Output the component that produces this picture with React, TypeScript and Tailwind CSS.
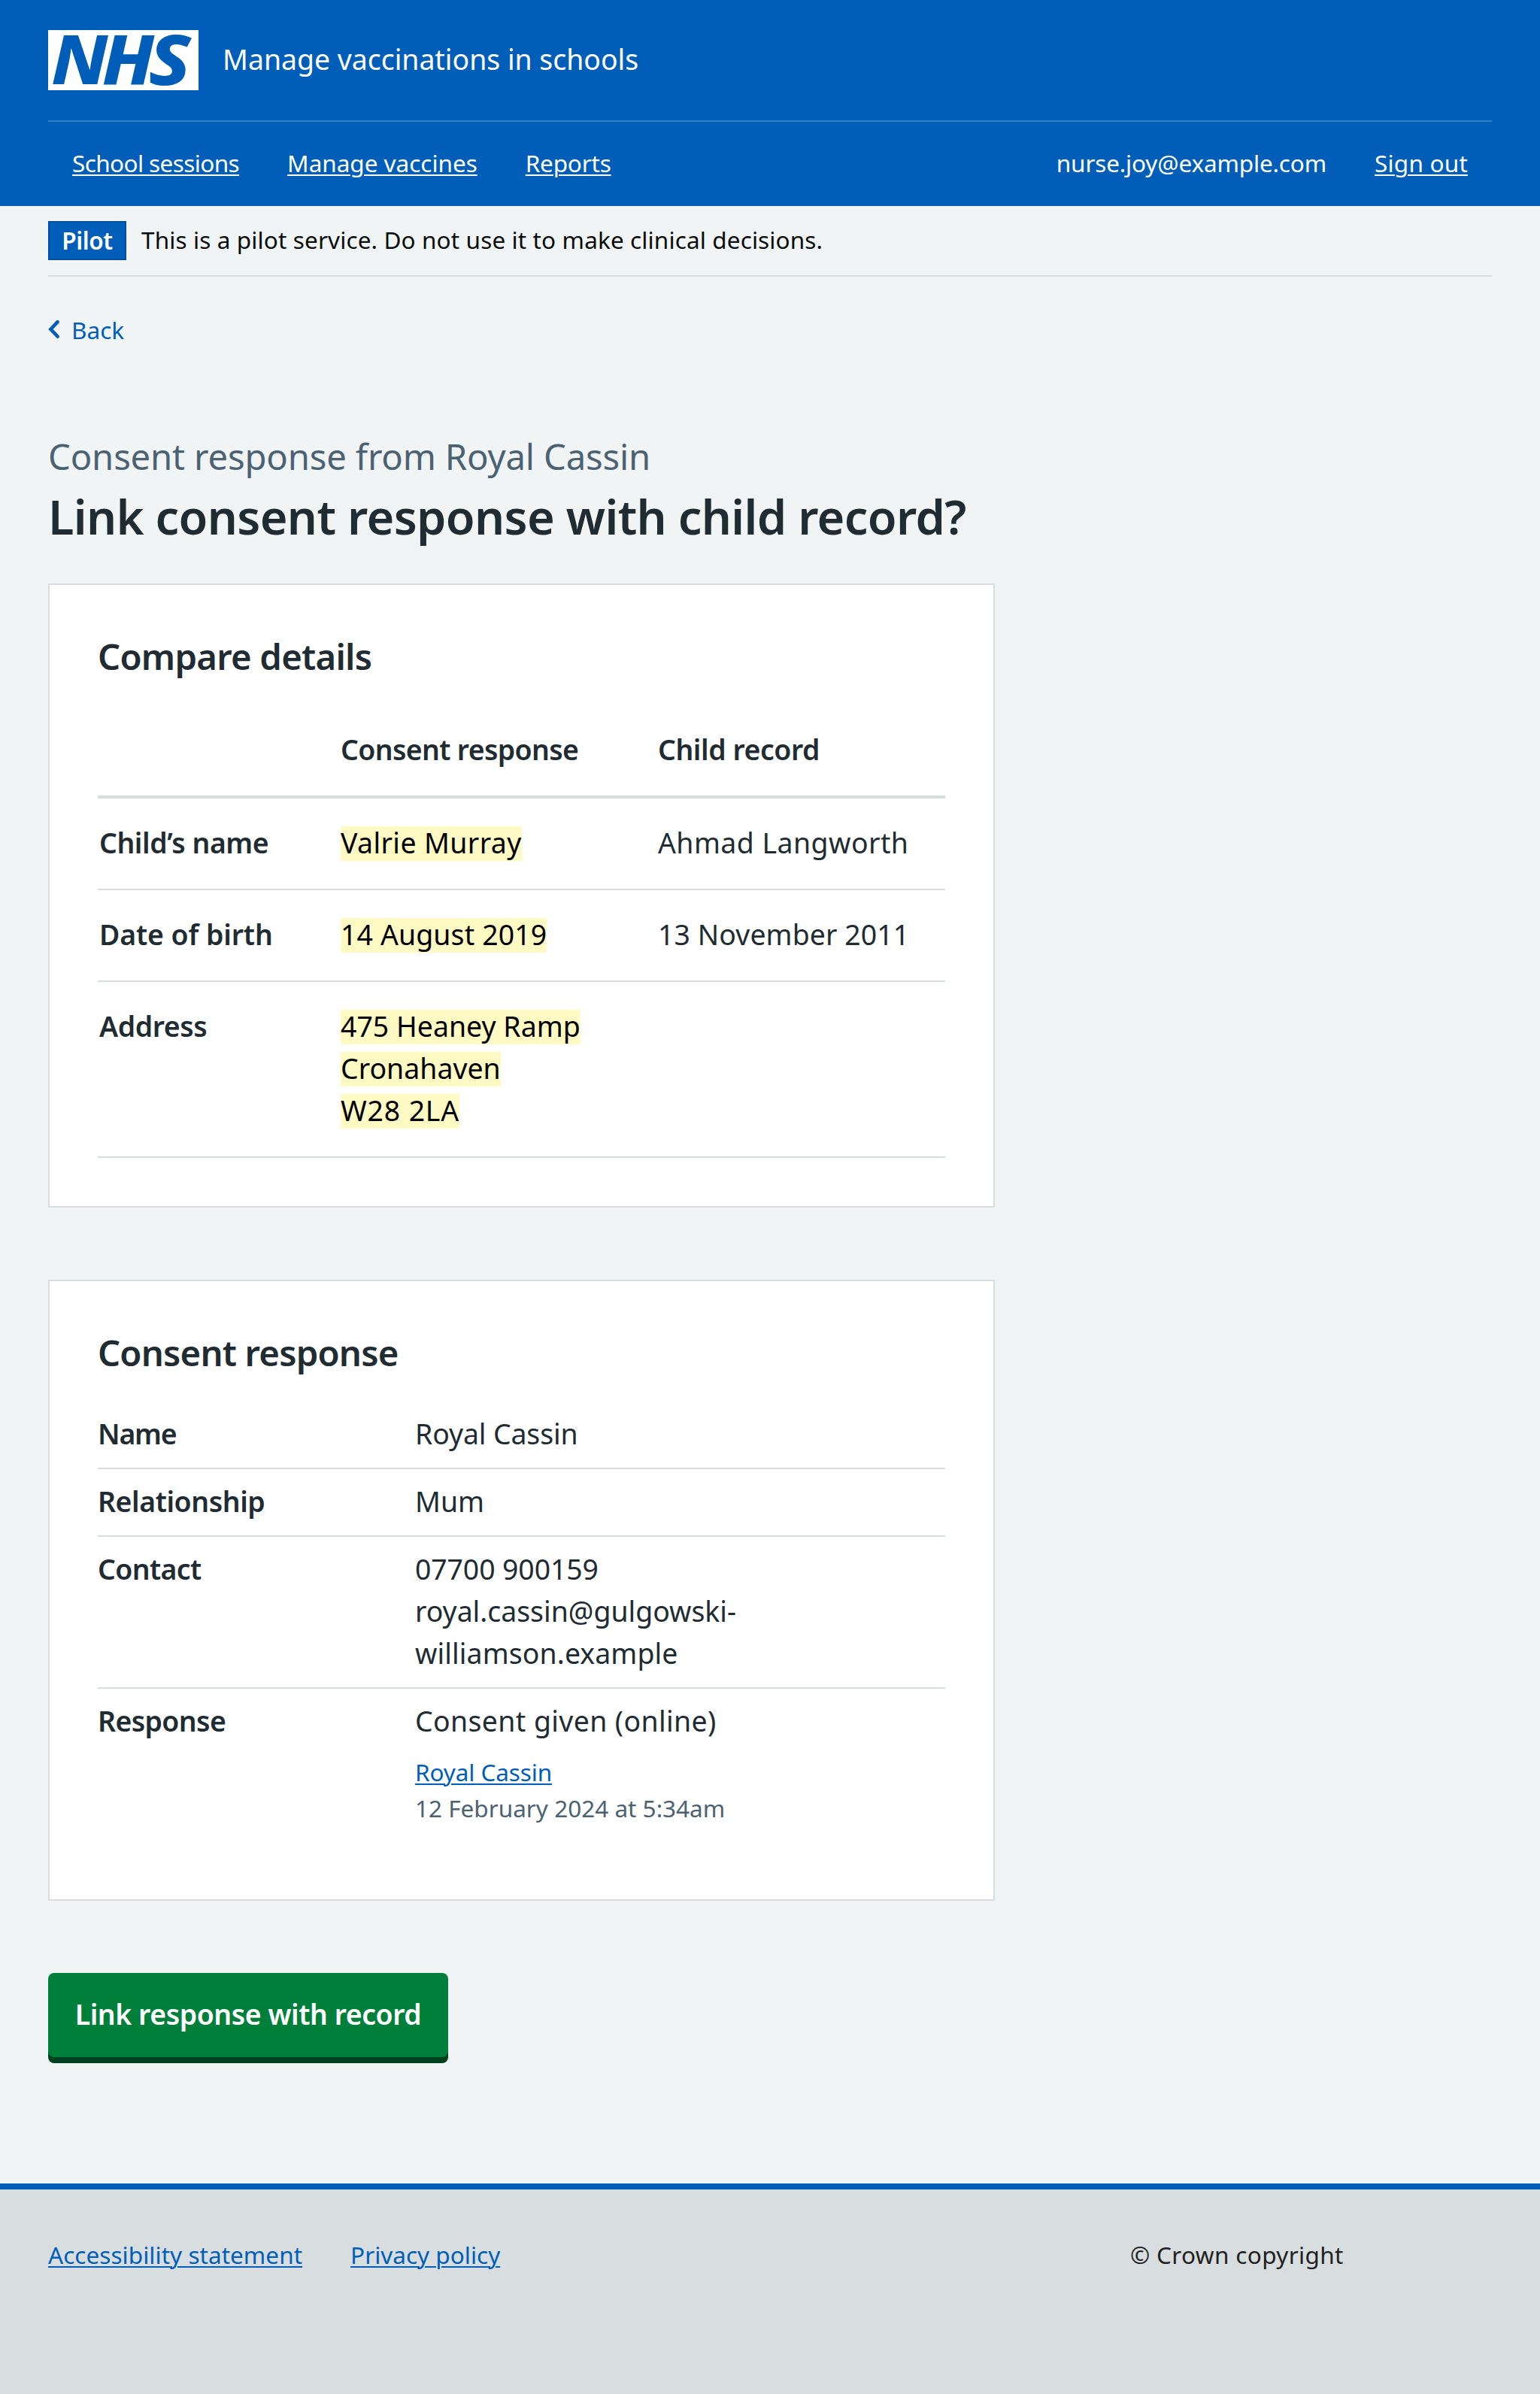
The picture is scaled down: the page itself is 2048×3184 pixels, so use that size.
import type { ReactNode } from 'react';

function Logo() {
  return (
    <svg viewBox="0 0 200 80" className="h-20 w-[200px] overflow-visible" role="img" aria-label="NHS">
      <rect width="200" height="80" fill="#ffffff" />
      <g fill="#005eb8" fontSize="91" fontWeight="800" fontStyle="italic" className="font-['Noto_Sans',sans-serif]">
        <text transform="translate(4.2 72.3) scale(1.07 1)">N</text>
        <text transform="translate(71.8 72.3) scale(1.078 1)">H</text>
        <text transform="translate(133.7 72.5) scale(1.145 1.015)">S</text>
      </g>
    </svg>
  );
}

function NavLink({ children, cls }: { children: ReactNode; cls: string }) {
  return (
    <a href="#" className={`underline decoration-2 underline-offset-[3px] ${cls}`}>
      {children}
    </a>
  );
}

function Card({ title, titleCls, children }: { title: string; titleCls: string; children: ReactNode }) {
  return (
    <section className="w-[1259px] border-2 border-[#d8dde0] bg-white px-16 pt-16">
      <h2 className={`h-24 text-[47.25px] leading-[62px] font-semibold ${titleCls}`}>{title}</h2>
      {children}
    </section>
  );
}

function Mark({ children, cls }: { children: ReactNode; cls: string }) {
  return <mark className={`block h-[46px] w-fit bg-[#fff9c4] leading-[43px] text-black ${cls}`}>{children}</mark>;
}

interface CompareRowProps {
  label: string;
  labelCls: string;
  height: string;
  mark: ReactNode;
  record?: ReactNode;
}

function CompareRow({ label, labelCls, height, mark, record }: CompareRowProps) {
  return (
    <div className={`grid grid-cols-[323px_422px_1fr] border-b-2 border-[#d8dde0] ${height}`}>
      <div className={`pt-[31px] pl-0.5 font-semibold ${labelCls}`}>{label}</div>
      <div className="flex flex-col gap-2.5 pt-[37px]">{mark}</div>
      <div className="pt-[31px]">{record}</div>
    </div>
  );
}

function SummaryRow({ label, labelCls, height, children }: { label: string; labelCls: string; height: string; children: ReactNode }) {
  return (
    <div className={`grid grid-cols-[422px_1fr] pt-[15px] ${height}`}>
      <div className={`font-semibold ${labelCls}`}>{label}</div>
      <div>{children}</div>
    </div>
  );
}

export default function App() {
  return (
    <div className="flex h-[3184px] w-[2048px] flex-col bg-[#f0f4f5] font-['Noto_Sans',sans-serif] text-[37.4px] leading-[56px] text-[#212b32]">
      <header className="h-[274px] bg-[#005eb8] px-16 text-white">
        <div className="flex h-[162px] items-center gap-8 border-b-2 border-white/20">
          <Logo />
          <span className="mb-0.5 leading-10">Manage vaccinations in schools</span>
        </div>
        <nav className="flex justify-between px-8 pt-[31px] text-[31.5px] leading-[48px]">
          <div className="flex gap-16">
            <NavLink cls="tracking-[-0.6px]">School sessions</NavLink>
            <NavLink cls="tracking-[-0.03px]">Manage vaccines</NavLink>
            <NavLink cls="tracking-[-0.2px]">Reports</NavLink>
          </div>
          <div className="flex gap-16">
            <span className="tracking-[-0.15px]">nurse.joy@example.com</span>
            <NavLink cls="tracking-[0.2px]">Sign out</NavLink>
          </div>
        </nav>
      </header>

      <div className="mx-16 flex h-[94px] gap-5 border-b-2 border-[#d8dde0] pt-5 text-[31.5px] leading-[48px]">
        <strong className="h-[52px] w-[104px] border-2 border-[#004fa0] bg-[#005eb8] text-center font-semibold tracking-[-0.4px] text-white">
          Pilot
        </strong>
        <span className="pt-px tracking-[0.12px] text-[#0b0c0c]">This is a pilot service. Do not use it to make clinical decisions.</span>
      </div>

      <main className="flex h-[2536px] flex-col px-16 pt-[47px]">
        <a href="#" className="flex h-12 text-[31.5px] leading-[48px] text-[#005eb8]">
          <svg viewBox="0 0 31 48" className="h-12 w-[31px]" fill="none" stroke="currentColor" strokeWidth="4.6" strokeLinecap="round">
            <path d="M12.6 13.2 3.4 22.9l9.2 9.6" />
          </svg>
          Back
        </a>
        <h1 className="mt-28 h-[201px]">
          <span className="block text-[47.25px] leading-[64px] tracking-[-0.17px] text-[#4c6272]">Consent response from Royal Cassin</span>
          <span className="mt-2 block text-[63px] leading-[80px] font-semibold tracking-[-0.66px]">Link consent response with child record?</span>
        </h1>

        <Card title="Compare details" titleCls="tracking-[-0.75px]">
          <div className="grid h-[124px] grid-cols-[323px_422px_1fr] border-b-4 border-[#d8dde0] pt-[31px] font-semibold">
            <div />
            <div className="tracking-[-0.63px]">Consent response</div>
            <div className="tracking-[-0.42px]">Child record</div>
          </div>
          <CompareRow
            label="Child’s name"
            labelCls="tracking-[-0.42px]"
            height="h-[122px]"
            mark={<Mark cls="tracking-[0.4px]">Valrie Murray</Mark>}
            record={<span className="tracking-[0.47px]">Ahmad Langworth</span>}
          />
          <CompareRow
            label="Date of birth"
            labelCls="tracking-[-0.1px]"
            height="h-[122px]"
            mark={<Mark cls="tracking-[0.14px]">14 August 2019</Mark>}
            record={<span className="tracking-[0.1px]">13 November 2011</span>}
          />
          <CompareRow
            label="Address"
            labelCls="tracking-[-0.4px]"
            height="h-[234px]"
            mark={
              <>
                <Mark cls="tracking-[0.04px]">475 Heaney Ramp</Mark>
                <Mark cls="tracking-[0.04px]">Cronahaven</Mark>
                <Mark cls="tracking-[0.84px]">W28 2LA</Mark>
              </>
            }
          />
          <div className="h-16" />
        </Card>

        <div className="h-24" />

        <Card title="Consent response" titleCls="tracking-[-0.8px]">
          <SummaryRow label="Name" labelCls="tracking-[-1.2px]" height="h-[90px] border-b-2 border-[#d8dde0]">
            <span className="tracking-[-0.1px]">Royal Cassin</span>
          </SummaryRow>
          <SummaryRow label="Relationship" labelCls="tracking-[-0.42px]" height="h-[90px] border-b-2 border-[#d8dde0]">
            Mum
          </SummaryRow>
          <SummaryRow label="Contact" labelCls="tracking-[-0.6px]" height="h-[202px] border-b-2 border-[#d8dde0]">
            <span className="tracking-[-0.1px]">07700 900159</span>
            <br />
            royal.cassin@gulgowski-
            <br />
            <span className="tracking-[0.12px]">williamson.example</span>
          </SummaryRow>
          <SummaryRow label="Response" labelCls="tracking-[-0.6px]" height="h-[280px]">
            <p className="tracking-[0.4px]">Consent given (online)</p>
            <div className="mt-4 text-[31.5px] leading-[48px]">
              <a href="#" className="tracking-[-0.11px] text-[#005eb8] underline decoration-2 underline-offset-[3px]">
                Royal Cassin
              </a>
              <p className="text-[#4c6272]">12 February 2024 at 5:34am</p>
            </div>
          </SummaryRow>
        </Card>

        <button className="mt-24 h-28 w-[532px] rounded-lg bg-[#007f3b] pb-0.5 font-semibold tracking-[-0.42px] text-white shadow-[0_8px_0_#00401e]">
          Link response with record
        </button>
      </main>

      <footer className="flex h-[280px] justify-between border-t-8 border-[#005eb8] bg-[#d8dde0] px-16 pt-[63px] text-[31.5px] leading-[48px]">
        <div className="flex items-start gap-16 text-[#005eb8]">
          <NavLink cls="tracking-[0.04px]">Accessibility statement</NavLink>
          <NavLink cls="">Privacy policy</NavLink>
        </div>
        <p className="w-[481px] tracking-[0.35px] text-[#231f20]">© Crown copyright</p>
      </footer>
    </div>
  );
}
